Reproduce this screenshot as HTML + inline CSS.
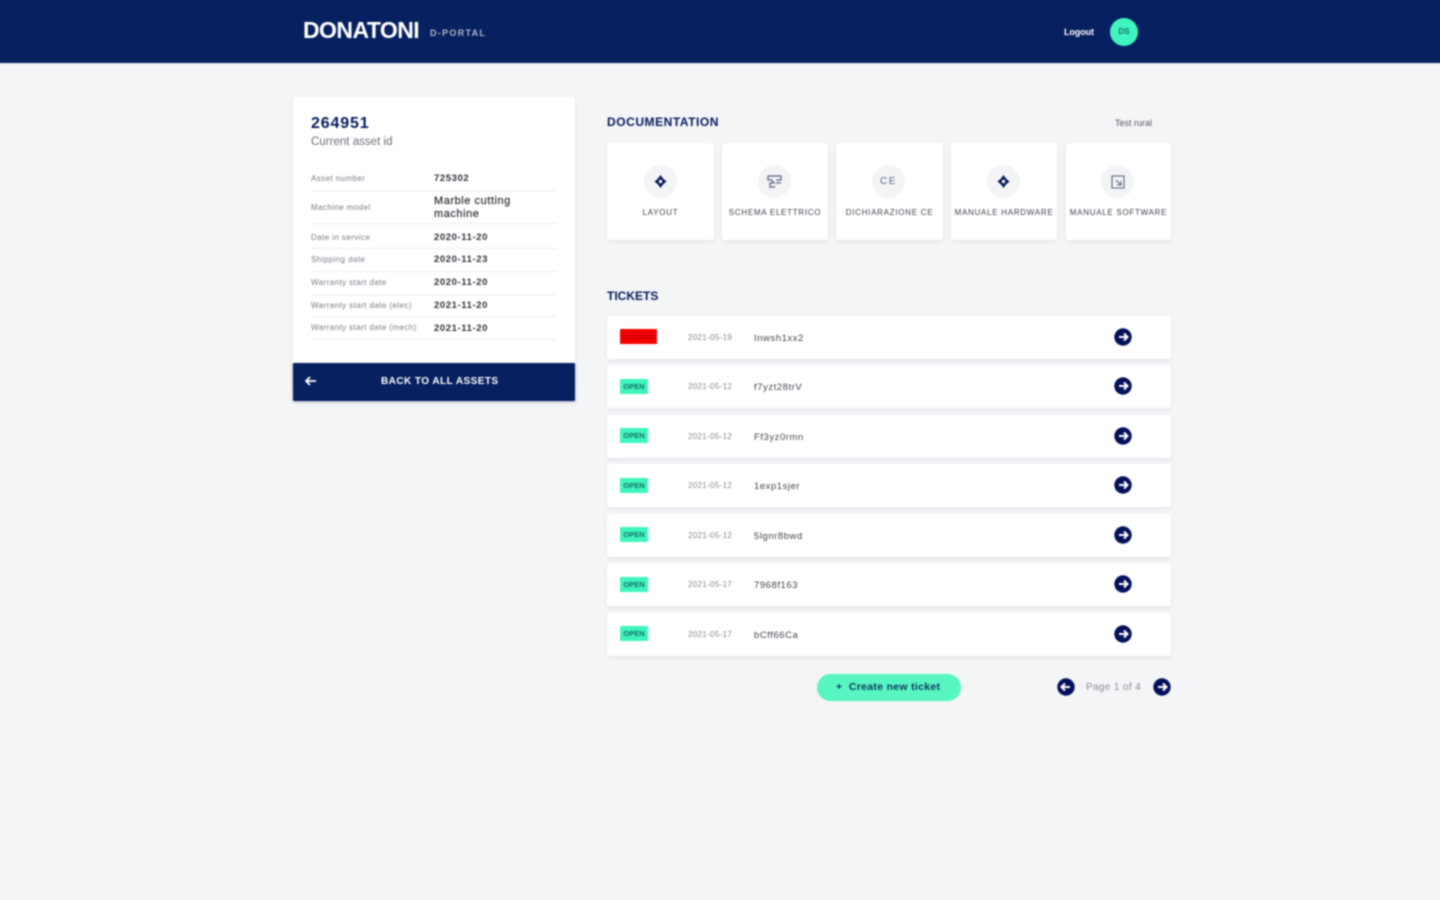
<!DOCTYPE html>
<html lang="en">
<head>
<meta charset="utf-8">
<title>Donatoni D-Portal</title>
<style>
html,body{margin:0;padding:0;width:1440px;height:900px;overflow:hidden;background:#f3f5f7}
body{font-family:"Liberation Sans",sans-serif;color:#071a5c;position:relative}
#p{position:absolute;left:0;top:0;width:1440px;height:900px;filter:blur(.7px)}
#p div,#p span,#p svg{position:absolute;white-space:nowrap}
.card{background:#fff;border-radius:3px;box-shadow:0 2px 5px rgba(20,30,70,.07)}
.lab{left:311px;font-size:8px;color:#777b86;line-height:10px;letter-spacing:.42px}
.val{left:434px;font-size:9.500px;font-weight:bold;color:#30323c;line-height:11px;letter-spacing:.6px}
.ln{left:311px;width:246px;height:1px;background:#eceef1}
.doc{top:143px;height:97px}
.ic{top:165px;width:33px;height:33px;border-radius:50%;background:#f3f4f6}
.dl{top:208px;font-size:8px;line-height:10px;color:#3c3f4c;text-align:center;letter-spacing:.72px}
.row{left:607px;width:564px;height:43px}
.tag{left:620px;width:28px;height:15px;background:#3df5bd;border-radius:1px;font-size:7.500px;font-weight:bold;line-height:15px;text-align:center;color:#1c6d6a}
.dt{left:688px;font-size:8px;color:#85888f;line-height:10px;letter-spacing:.32px;margin-top:.5px}
.nm{left:754px;font-size:9.500px;color:#44464f;line-height:11px;letter-spacing:.55px;margin-top:.5px}
.go{width:18px;height:18px}
</style>
</head>
<body>
<div id="p">
<div style="left:-6px;top:-6px;width:1452px;height:69px;background:#07205f;border-bottom:1px solid #e4e6ee"></div>
<div style="left:303px;top:17px;font-size:23px;line-height:27px;font-weight:bold;color:#fff;letter-spacing:-.55px">DONATONI</div>
<div style="left:430px;top:28px;font-size:9px;line-height:11px;font-weight:bold;color:#aeb6ca;letter-spacing:1.300px">D-PORTAL</div>
<div style="left:1064px;top:27px;font-size:9px;line-height:11px;font-weight:bold;color:#fff;letter-spacing:-.1px">Logout</div>
<div style="left:1110px;top:18px;width:28px;height:28px;border-radius:50%;background:#3df5bd;font-size:8px;font-weight:bold;line-height:28px;text-align:center;color:#1c6d6a">DS</div>

<div class="card" style="left:293px;top:97px;width:282px;height:290px"></div>
<div style="left:311px;top:115px;font-size:16px;line-height:18px;font-weight:bold;color:#071a5c;letter-spacing:.85px">264951</div>
<div style="left:311px;top:136px;font-size:11.500px;line-height:13px;color:#6c6f7a;letter-spacing:.02px">Current asset id</div>

<div class="lab" style="top:174px">Asset number</div><div class="val" style="top:173px">725302</div><div class="ln" style="top:190px"></div>
<div class="lab" style="top:203px">Machine model</div><div class="val" style="top:195px;font-weight:normal;font-size:11px;line-height:13px;letter-spacing:.55px;-webkit-text-stroke:.2px #30323c">Marble cutting<br>machine</div><div class="ln" style="top:223px"></div>
<div class="lab" style="top:233px">Date in service</div><div class="val" style="top:232px">2020-11-20</div><div class="ln" style="top:248px"></div>
<div class="lab" style="top:255px">Shipping date</div><div class="val" style="top:254px">2020-11-23</div><div class="ln" style="top:271px"></div>
<div class="lab" style="top:278px">Warranty start date</div><div class="val" style="top:277px">2020-11-20</div><div class="ln" style="top:294px"></div>
<div class="lab" style="top:301px">Warranty start date (elec)</div><div class="val" style="top:300px">2021-11-20</div><div class="ln" style="top:316px"></div>
<div class="lab" style="top:323px">Warranty start date (mech)</div><div class="val" style="top:323px">2021-11-20</div><div class="ln" style="top:339px"></div>

<div style="left:293px;top:363px;width:282px;height:38px;background:#07205f;border-radius:1px;box-shadow:0 1px 3px rgba(20,30,70,.3)"></div>
<svg style="left:305px;top:376px" width="12" height="10" viewBox="0 0 12 10"><path d="M5 1 1 5l4 4M1.500 5H11" fill="none" stroke="#fff" stroke-width="1.800"/></svg>
<div style="left:381px;top:376px;font-size:10px;line-height:11px;font-weight:bold;color:#fff;letter-spacing:.45px">BACK TO ALL ASSETS</div>

<div style="left:607px;top:115px;font-size:12px;line-height:14px;font-weight:bold;color:#071a5c;letter-spacing:.55px">DOCUMENTATION</div>
<div style="left:1115px;top:118px;font-size:9px;line-height:11px;color:#555862">Test rural</div>

<div class="card doc" style="left:607px;width:107px"></div>
<div class="card doc" style="left:722px;width:106px"></div>
<div class="card doc" style="left:836px;width:107px"></div>
<div class="card doc" style="left:951px;width:106px"></div>
<div class="card doc" style="left:1066px;width:105px"></div>

<div class="ic" style="left:644px"></div>
<svg style="left:654px;top:175px" width="13" height="13" viewBox="0 0 13 13"><path d="M6.500 0 9 3.500l3.500 3-3.500 3-2.500 3.500L4 9.500l-3.500-3L4 3.500z" fill="#071a5c"/><circle cx="6.500" cy="6.500" r="1.700" fill="#f3f4f6"/></svg>
<div class="ic" style="left:758px"></div>
<svg style="left:767px;top:174px" width="15" height="15" viewBox="0 0 15 15"><path d="M1 2h13v4H9M1 2v4h4l2 3H3v4h5M9 9h5" fill="none" stroke="#5a6080" stroke-width="1.200"/></svg>
<div class="ic" style="left:872px"></div>
<div style="left:880px;top:176px;font-size:10px;line-height:11px;color:#5a6080;letter-spacing:1.500px">CE</div>
<div class="ic" style="left:987px"></div>
<svg style="left:997px;top:175px" width="13" height="13" viewBox="0 0 13 13"><path d="M6.500 0 9 3.500l3.500 3-3.500 3-2.500 3.500L4 9.500l-3.500-3L4 3.500z" fill="#071a5c"/><circle cx="6.500" cy="6.500" r="1.700" fill="#f3f4f6"/></svg>
<div class="ic" style="left:1101px"></div>
<svg style="left:1111px;top:175px" width="14" height="14" viewBox="0 0 14 14"><path d="M1 1h12v12H1zM1 1l3 0M5 5l5 5M10 6v4H6" fill="none" stroke="#5a6080" stroke-width="1.100"/></svg>

<div class="dl" style="left:607px;width:107px">LAYOUT</div>
<div class="dl" style="left:722px;width:106px">SCHEMA ELETTRICO</div>
<div class="dl" style="left:836px;width:107px">DICHIARAZIONE CE</div>
<div class="dl" style="left:951px;width:106px">MANUALE HARDWARE</div>
<div class="dl" style="left:1066px;width:105px">MANUALE SOFTWARE</div>

<div style="left:607px;top:289px;font-size:12px;line-height:14px;font-weight:bold;color:#071a5c">TICKETS</div>

<div class="card row" style="top:316px"></div>
<div class="tag" style="top:329px;width:37px;background:#f30000;color:#c40000">CLOSED</div>
<div class="dt" style="top:332px">2021-05-19</div><div class="nm" style="top:332px">Inwsh1xx2</div>

<div class="card row" style="top:365px"></div>
<div class="tag" style="top:379px">OPEN</div>
<div class="dt" style="top:381px">2021-05-12</div><div class="nm" style="top:381px">f7yzt28trV</div>

<div class="card row" style="top:415px"></div>
<div class="tag" style="top:428px">OPEN</div>
<div class="dt" style="top:431px">2021-05-12</div><div class="nm" style="top:431px">Ff3yz0rmn</div>

<div class="card row" style="top:464px"></div>
<div class="tag" style="top:478px">OPEN</div>
<div class="dt" style="top:480px">2021-05-12</div><div class="nm" style="top:480px">1exp1sjer</div>

<div class="card row" style="top:514px"></div>
<div class="tag" style="top:527px">OPEN</div>
<div class="dt" style="top:530px">2021-05-12</div><div class="nm" style="top:530px">5lgnr8bwd</div>

<div class="card row" style="top:563px"></div>
<div class="tag" style="top:577px">OPEN</div>
<div class="dt" style="top:579px">2021-05-17</div><div class="nm" style="top:579px">7968f163</div>

<div class="card row" style="top:613px"></div>
<div class="tag" style="top:626px">OPEN</div>
<div class="dt" style="top:629px">2021-05-17</div><div class="nm" style="top:629px">bCff66Ca</div>

<svg class="go" style="left:1113.500px;top:328px" viewBox="0 0 18 18"><circle cx="9" cy="9" r="8.700" fill="#06105a"/><path d="M10 5.500 13.500 9 10 12.500M5 9h8" fill="none" stroke="#fff" stroke-width="2"/></svg>
<svg class="go" style="left:1113.500px;top:377px" viewBox="0 0 18 18"><circle cx="9" cy="9" r="8.700" fill="#06105a"/><path d="M10 5.500 13.500 9 10 12.500M5 9h8" fill="none" stroke="#fff" stroke-width="2"/></svg>
<svg class="go" style="left:1113.500px;top:427px" viewBox="0 0 18 18"><circle cx="9" cy="9" r="8.700" fill="#06105a"/><path d="M10 5.500 13.500 9 10 12.500M5 9h8" fill="none" stroke="#fff" stroke-width="2"/></svg>
<svg class="go" style="left:1113.500px;top:476px" viewBox="0 0 18 18"><circle cx="9" cy="9" r="8.700" fill="#06105a"/><path d="M10 5.500 13.500 9 10 12.500M5 9h8" fill="none" stroke="#fff" stroke-width="2"/></svg>
<svg class="go" style="left:1113.500px;top:526px" viewBox="0 0 18 18"><circle cx="9" cy="9" r="8.700" fill="#06105a"/><path d="M10 5.500 13.500 9 10 12.500M5 9h8" fill="none" stroke="#fff" stroke-width="2"/></svg>
<svg class="go" style="left:1113.500px;top:575px" viewBox="0 0 18 18"><circle cx="9" cy="9" r="8.700" fill="#06105a"/><path d="M10 5.500 13.500 9 10 12.500M5 9h8" fill="none" stroke="#fff" stroke-width="2"/></svg>
<svg class="go" style="left:1113.500px;top:625px" viewBox="0 0 18 18"><circle cx="9" cy="9" r="8.700" fill="#06105a"/><path d="M10 5.500 13.500 9 10 12.500M5 9h8" fill="none" stroke="#fff" stroke-width="2"/></svg>

<div style="left:817px;top:674px;width:144px;height:27px;border-radius:14px;background:#56f5c2"></div>
<div style="left:836px;top:681px;font-size:10.500px;line-height:13px;font-weight:bold;color:#0d3a5e;letter-spacing:.3px">+&nbsp; Create new ticket</div>

<svg class="go" style="left:1057px;top:678px" viewBox="0 0 18 18"><circle cx="9" cy="9" r="8.700" fill="#06105a"/><path d="M8 5.500 4.500 9 8 12.500M13 9H5" fill="none" stroke="#fff" stroke-width="2"/></svg>
<div style="left:1086px;top:682px;font-size:10px;line-height:12px;color:#8a8d96;letter-spacing:.35px">Page 1 of 4</div>
<svg class="go" style="left:1153px;top:678px" viewBox="0 0 18 18"><circle cx="9" cy="9" r="8.700" fill="#06105a"/><path d="M10 5.500 13.500 9 10 12.500M5 9h8" fill="none" stroke="#fff" stroke-width="2"/></svg>
</div>
</body>
</html>
